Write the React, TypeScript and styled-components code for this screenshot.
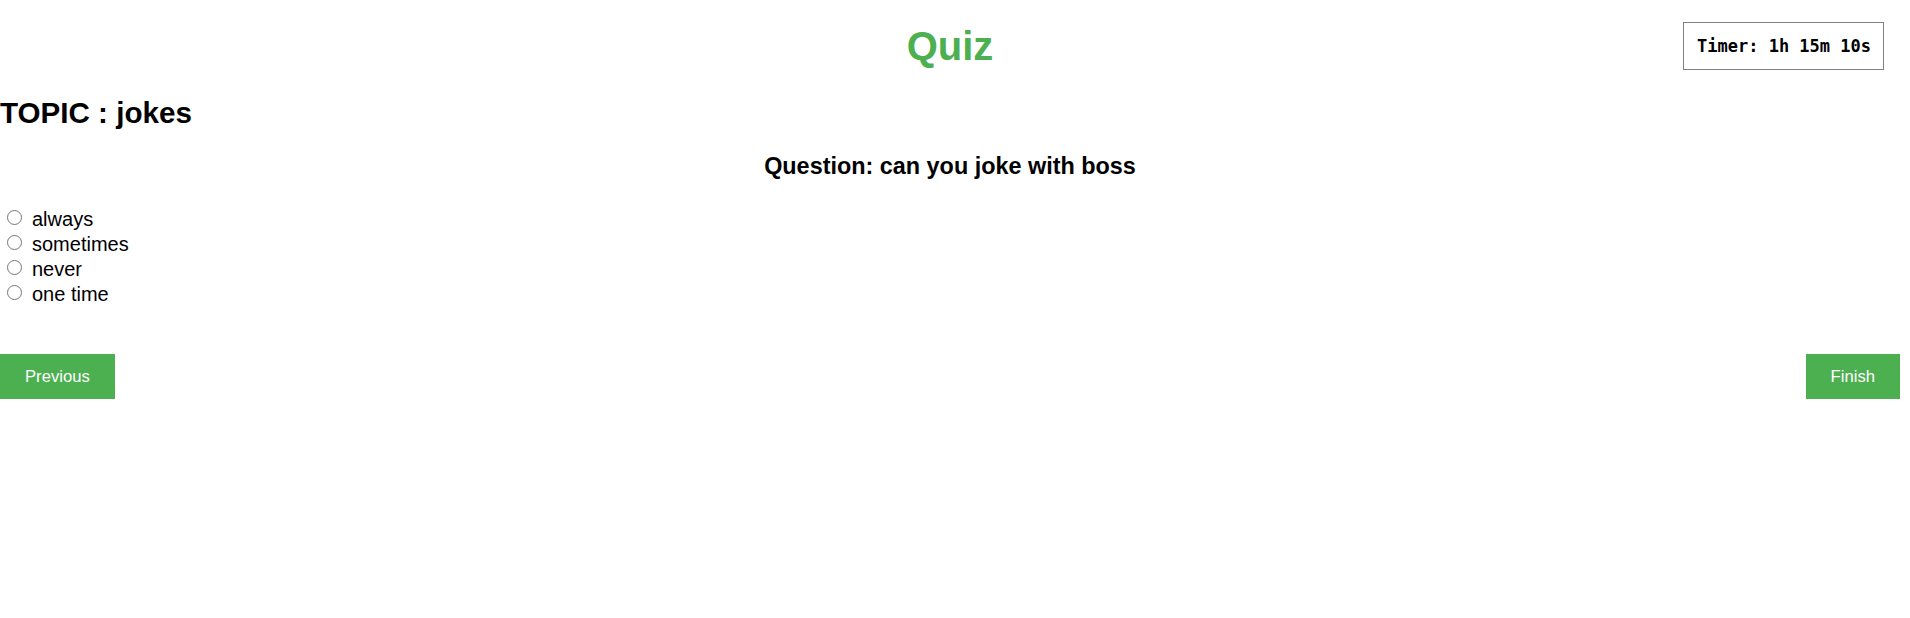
import styled, { createGlobalStyle } from "styled-components";

const GlobalStyle = createGlobalStyle`
  body {
    margin: 0;
    background: #fff;
    color: #000;
    font-family: "Liberation Sans", Arial, sans-serif;
  }
`;

const options = ["always", "sometimes", "never", "one time"];

const App = () => {
  return (
    <Page>
      <GlobalStyle />
      <Header>
        <Title>Quiz</Title>
        <Timer>Timer: 1h 15m 10s</Timer>
      </Header>

      <Topic>TOPIC : jokes</Topic>
      <Question>Question: can you joke with boss</Question>

      <OptionList>
        {options.map((opt) => (
          <Option key={opt}>
            <Radio type="radio" name="answer" value={opt} />
            <span>{opt}</span>
          </Option>
        ))}
      </OptionList>

      <Actions>
        <Button>Previous</Button>
        <Button>Finish</Button>
      </Actions>
    </Page>
  );
};

const Page = styled.div`
  width: 1900px;
`;

const Header = styled.header`
  position: relative;
  display: flex;
  justify-content: center;
  align-items: center;
  height: 48px;
  padding-top: 22px;
`;

const Title = styled.h1`
  margin: 0;
  font-size: 40px;
  font-weight: bold;
  line-height: 46px;
  color: #4caf50;
`;

const Timer = styled.div`
  position: absolute;
  right: 16px;
  top: 22px;
  box-sizing: border-box;
  height: 48px;
  display: flex;
  align-items: center;
  padding: 0 12px 0 13px;
  border: 1px solid #808080;
  font-family: "DejaVu Sans Mono", "Liberation Mono", monospace;
  font-size: 17px;
  font-weight: bold;
`;

const Topic = styled.h2`
  margin: 26px 0 0;
  font-size: 29.6px;
  font-weight: bold;
  line-height: 34px;
`;

const Question = styled.h3`
  margin: 23px 0 0;
  text-align: center;
  font-size: 23.4px;
  font-weight: bold;
  line-height: 27px;
`;

const OptionList = styled.div`
  margin-top: 27px;
  display: flex;
  flex-direction: column;
`;

const Option = styled.label`
  display: flex;
  align-items: flex-start;
  gap: 10px;
  height: 25px;
  font-size: 20px;
  line-height: 25px;
`;

const Radio = styled.input`
  appearance: none;
  box-sizing: border-box;
  width: 15px;
  height: 15px;
  margin: 3px 0 0 7px;
  border: 1px solid #767676;
  border-radius: 50%;
  background: #fff;
`;

const Actions = styled.div`
  margin-top: 47px;
  display: flex;
  justify-content: space-between;
`;

const Button = styled.button`
  height: 45px;
  padding: 0 25px;
  border: none;
  background: #4caf50;
  color: #fff;
  font-family: "Liberation Sans", Arial, sans-serif;
  font-size: 16.67px;
  cursor: pointer;
`;

export default App;
